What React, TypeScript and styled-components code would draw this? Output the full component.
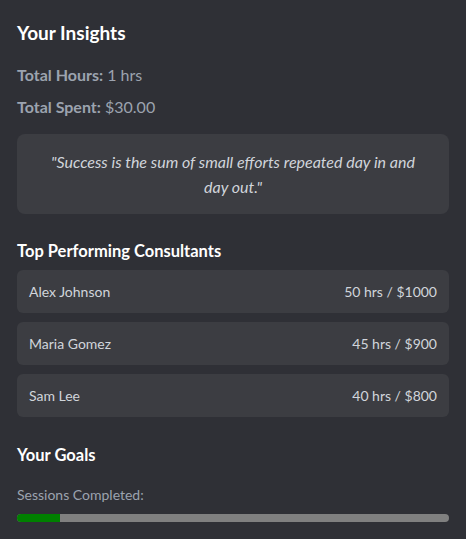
import React from "react";
import styled, { createGlobalStyle } from "styled-components";

const Global = createGlobalStyle`
  html, body { margin: 0; padding: 0; background: #2f3036; }
  body { font-family: Lato, "Open Sans", sans-serif; }
  * { box-sizing: border-box; }
`;

const Panel = styled.div`
  width: 466px;
  min-height: 539px;
  background: #2f3036;
  padding: 20px 17px 16px;
  color: #ffffff;
`;

const Title = styled.h2`
  margin: 0 0 18px;
  font-size: 19px;
  font-weight: 700;
  line-height: 26px;
  color: #ffffff;
`;

const Stat = styled.p`
  margin: 0 0 10px;
  font-size: 16px;
  line-height: 22px;
  color: #9ca3af;
  b { font-weight: 700; }
`;

const Quote = styled.div`
  margin-top: 16px;
  background: #3c3d42;
  border-radius: 8px;
  padding: 15px 28px;
  text-align: center;
  font-style: italic;
  font-size: 16px;
  line-height: 25px;
  color: #d1d5db;
`;

const SectionTitle = styled.h3<{ $top: number }>`
  margin: ${(p) => p.$top}px 0 8px;
  font-size: 16.5px;
  font-weight: 700;
  line-height: 22px;
  color: #ffffff;
`;

const List = styled.div`
  display: flex;
  flex-direction: column;
  gap: 9px;
`;

const Row = styled.div`
  display: flex;
  justify-content: space-between;
  align-items: center;
  height: 43px;
  padding: 0 12px;
  background: #3c3d42;
  border-radius: 6px;
  font-size: 14px;
  color: #d1d5db;
`;

const Label = styled.div`
  margin: 19px 0 9px;
  font-size: 14px;
  line-height: 20px;
  color: #9ca3af;
`;

const Track = styled.div`
  height: 8px;
  border-radius: 4px;
  background: #808080;
  overflow: hidden;
`;

const Fill = styled.div`
  height: 100%;
  background: #008000;
`;

const consultants = [
  { name: "Alex Johnson", stats: "50 hrs / $1000" },
  { name: "Maria Gomez", stats: "45 hrs / $900" },
  { name: "Sam Lee", stats: "40 hrs / $800" },
];

export default function App() {
  return (
    <>
      <Global />
      <Panel>
        <Title>Your Insights</Title>
        <Stat><b>Total Hours:</b> 1 hrs</Stat>
        <Stat><b>Total Spent:</b> $30.00</Stat>
        <Quote>"Success is the sum of small efforts repeated day in and day out."</Quote>
        <SectionTitle $top={26}>Top Performing Consultants</SectionTitle>
        <List>
          {consultants.map((c) => (
            <Row key={c.name}>
              <span>{c.name}</span>
              <span>{c.stats}</span>
            </Row>
          ))}
        </List>
        <SectionTitle $top={27}>Your Goals</SectionTitle>
        <Label>Sessions Completed:</Label>
        <Track>
          <Fill style={{ width: "10%" }} />
        </Track>
      </Panel>
    </>
  );
}
